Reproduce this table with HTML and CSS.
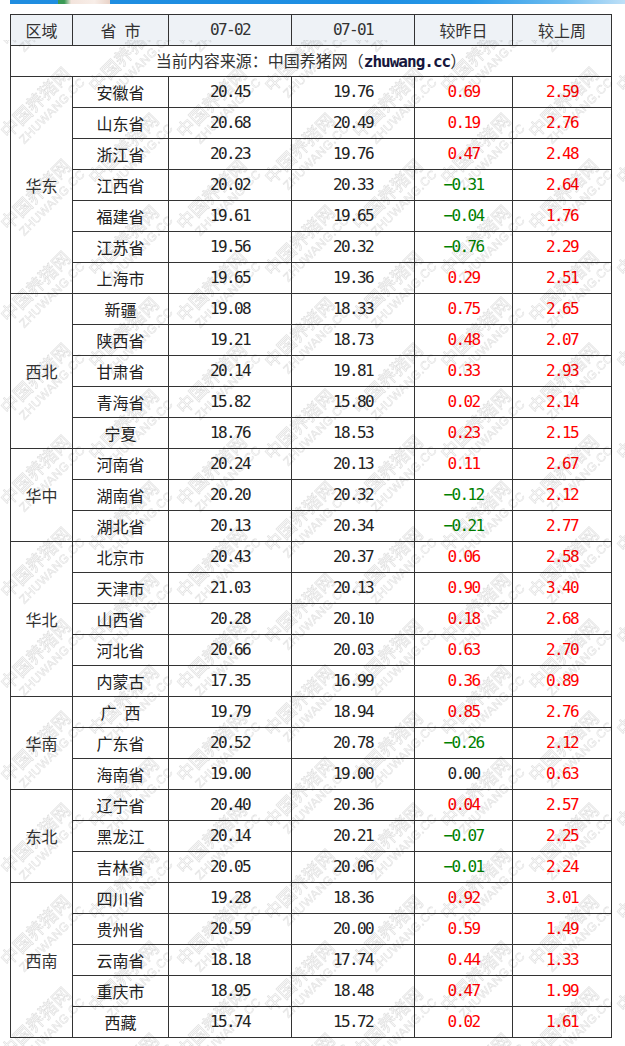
FILE: index.html
```html
<!DOCTYPE html>
<html lang="zh-CN">
<head>
<meta charset="utf-8">
<title>猪价表</title>
<link rel="stylesheet" href="styles.css">
</head>
<body>
<div class="page">
  <div class="banner"><span class="banner-person"></span></div>
  <table class="price">
    <colgroup>
      <col class="c1"><col class="c2"><col class="c3"><col class="c4"><col class="c5"><col class="c6">
    </colgroup>
    <thead>
      <tr class="head">
        <th>区域</th><th>省&ensp;市</th><th class="num">07-02</th><th class="num">07-01</th><th>较昨日</th><th>较上周</th>
      </tr>
    </thead>
    <tbody>
      <tr><td colspan="6" class="src">当前内容来源：中国养猪网（<b class="site">zhuwang.cc</b>）</td></tr>

      <tr><td rowspan="7" class="area">华东</td><td>安徽省</td><td class="num">20.45</td><td class="num">19.76</td><td class="num up">0.69</td><td class="num up">2.59</td></tr>
      <tr><td>山东省</td><td class="num">20.68</td><td class="num">20.49</td><td class="num up">0.19</td><td class="num up">2.76</td></tr>
      <tr><td>浙江省</td><td class="num">20.23</td><td class="num">19.76</td><td class="num up">0.47</td><td class="num up">2.48</td></tr>
      <tr><td>江西省</td><td class="num">20.02</td><td class="num">20.33</td><td class="num down">−0.31</td><td class="num up">2.64</td></tr>
      <tr><td>福建省</td><td class="num">19.61</td><td class="num">19.65</td><td class="num down">−0.04</td><td class="num up">1.76</td></tr>
      <tr><td>江苏省</td><td class="num">19.56</td><td class="num">20.32</td><td class="num down">−0.76</td><td class="num up">2.29</td></tr>
      <tr><td>上海市</td><td class="num">19.65</td><td class="num">19.36</td><td class="num up">0.29</td><td class="num up">2.51</td></tr>

      <tr><td rowspan="5" class="area">西北</td><td>新疆</td><td class="num">19.08</td><td class="num">18.33</td><td class="num up">0.75</td><td class="num up">2.65</td></tr>
      <tr><td>陕西省</td><td class="num">19.21</td><td class="num">18.73</td><td class="num up">0.48</td><td class="num up">2.07</td></tr>
      <tr><td>甘肃省</td><td class="num">20.14</td><td class="num">19.81</td><td class="num up">0.33</td><td class="num up">2.93</td></tr>
      <tr><td>青海省</td><td class="num">15.82</td><td class="num">15.80</td><td class="num up">0.02</td><td class="num up">2.14</td></tr>
      <tr><td>宁夏</td><td class="num">18.76</td><td class="num">18.53</td><td class="num up">0.23</td><td class="num up">2.15</td></tr>

      <tr><td rowspan="3" class="area">华中</td><td>河南省</td><td class="num">20.24</td><td class="num">20.13</td><td class="num up">0.11</td><td class="num up">2.67</td></tr>
      <tr><td>湖南省</td><td class="num">20.20</td><td class="num">20.32</td><td class="num down">−0.12</td><td class="num up">2.12</td></tr>
      <tr><td>湖北省</td><td class="num">20.13</td><td class="num">20.34</td><td class="num down">−0.21</td><td class="num up">2.77</td></tr>

      <tr><td rowspan="5" class="area">华北</td><td>北京市</td><td class="num">20.43</td><td class="num">20.37</td><td class="num up">0.06</td><td class="num up">2.58</td></tr>
      <tr><td>天津市</td><td class="num">21.03</td><td class="num">20.13</td><td class="num up">0.90</td><td class="num up">3.40</td></tr>
      <tr><td>山西省</td><td class="num">20.28</td><td class="num">20.10</td><td class="num up">0.18</td><td class="num up">2.68</td></tr>
      <tr><td>河北省</td><td class="num">20.66</td><td class="num">20.03</td><td class="num up">0.63</td><td class="num up">2.70</td></tr>
      <tr><td>内蒙古</td><td class="num">17.35</td><td class="num">16.99</td><td class="num up">0.36</td><td class="num up">0.89</td></tr>

      <tr><td rowspan="3" class="area">华南</td><td>广&ensp;西</td><td class="num">19.79</td><td class="num">18.94</td><td class="num up">0.85</td><td class="num up">2.76</td></tr>
      <tr><td>广东省</td><td class="num">20.52</td><td class="num">20.78</td><td class="num down">−0.26</td><td class="num up">2.12</td></tr>
      <tr><td>海南省</td><td class="num">19.00</td><td class="num">19.00</td><td class="num">0.00</td><td class="num up">0.63</td></tr>

      <tr><td rowspan="3" class="area">东北</td><td>辽宁省</td><td class="num">20.40</td><td class="num">20.36</td><td class="num up">0.04</td><td class="num up">2.57</td></tr>
      <tr><td>黑龙江</td><td class="num">20.14</td><td class="num">20.21</td><td class="num down">−0.07</td><td class="num up">2.25</td></tr>
      <tr><td>吉林省</td><td class="num">20.05</td><td class="num">20.06</td><td class="num down">−0.01</td><td class="num up">2.24</td></tr>

      <tr><td rowspan="5" class="area">西南</td><td>四川省</td><td class="num">19.28</td><td class="num">18.36</td><td class="num up">0.92</td><td class="num up">3.01</td></tr>
      <tr><td>贵州省</td><td class="num">20.59</td><td class="num">20.00</td><td class="num up">0.59</td><td class="num up">1.49</td></tr>
      <tr><td>云南省</td><td class="num">18.18</td><td class="num">17.74</td><td class="num up">0.44</td><td class="num up">1.33</td></tr>
      <tr><td>重庆市</td><td class="num">18.95</td><td class="num">18.48</td><td class="num up">0.47</td><td class="num up">1.99</td></tr>
      <tr><td>西藏</td><td class="num">15.74</td><td class="num">15.72</td><td class="num up">0.02</td><td class="num up">1.61</td></tr>
    </tbody>
  </table>

  <svg class="wm" width="625" height="1046" viewBox="0 0 625 1046" aria-hidden="true">
    <defs>
      <g id="mark">
        <g transform="rotate(-45)">
          <text class="wm-a" x="0" y="3" text-anchor="middle">中国养猪网</text>
          <text class="wm-b" x="6" y="18" text-anchor="middle">ZHUWANG.CC</text>
        </g>
      </g>
      <pattern id="wmA" patternUnits="userSpaceOnUse" x="-6" y="59" width="176" height="92">
        <use href="#mark" x="44" y="46"/>
      </pattern>
      <pattern id="wmB" patternUnits="userSpaceOnUse" x="82" y="105" width="176" height="92">
        <use href="#mark" x="44" y="46"/>
      </pattern>
    </defs>
    <rect x="0" y="40" width="625" height="1006" fill="url(#wmA)"/>
    <rect x="0" y="40" width="625" height="1006" fill="url(#wmB)"/>
  </svg>
</div>
</body>
</html>
```

FILE: styles.css
```css
html, body {
  margin: 0;
  padding: 0;
  background: #ffffff;
}

.page {
  position: relative;
  width: 625px;
  height: 1046px;
  overflow: hidden;
  font-family: "Noto Sans CJK SC", "Noto Sans", sans-serif;
  color: #222;
}

.banner {
  position: relative;
  height: 4px;
  margin-left: 10px;
  background: linear-gradient(90deg, #1f8de0 0%, #1e8fe3 60%, #2a9ae8 75%, #6fbdf0 90%, #bfe0f7 100%);
}

.banner-person {
  position: absolute;
  left: 48px;
  top: 0;
  width: 52px;
  height: 4px;
  background: linear-gradient(90deg, #3a9a55 0%, #3a9a55 12%, #f3e4dc 25%, #f8eee8 70%, #e9d3c8 100%);
}

.price {
  margin: 10px 0 0 10px;
  width: 601px;
  border-collapse: collapse;
  table-layout: fixed;
  font-size: 16px;
}

.c1 { width: 62px; }
.c2 { width: 96px; }
.c3 { width: 123px; }
.c4 { width: 123px; }
.c5 { width: 98px; }
.c6 { width: 99px; }

.price th,
.price td {
  border: 1px solid #333;
  height: 30px;
  padding: 0;
  text-align: center;
  vertical-align: middle;
  line-height: 20px;
  font-weight: normal;
  white-space: nowrap;
}

.head th {
  background: #eef2f6;
  color: #333;
}

.num {
  font-family: "DejaVu Sans Mono", "Liberation Mono", monospace;
  letter-spacing: -1.6px;
  font-size: 16px;
}

.up { color: #ff0000; }
.down { color: #008000; }

.src {
  color: #333;
}

.site {
  font-family: "DejaVu Sans Mono", "Liberation Mono", monospace;
  font-weight: bold;
  color: #16163c;
  letter-spacing: -1px;
}

.area {
  color: #333;
}

.wm {
  position: absolute;
  left: 0;
  top: 0;
  pointer-events: none;
}

.wm-a {
  font-family: "Noto Sans CJK SC", sans-serif;
  font-size: 18px;
  font-weight: normal;
  fill: none;
  stroke: rgba(0, 0, 0, 0.13);
  stroke-width: 0.7px;
}

.wm-b {
  font-family: "Liberation Sans", sans-serif;
  font-size: 12px;
  letter-spacing: 0.5px;
  fill: none;
  stroke: rgba(0, 0, 0, 0.12);
  stroke-width: 0.6px;
}
```
